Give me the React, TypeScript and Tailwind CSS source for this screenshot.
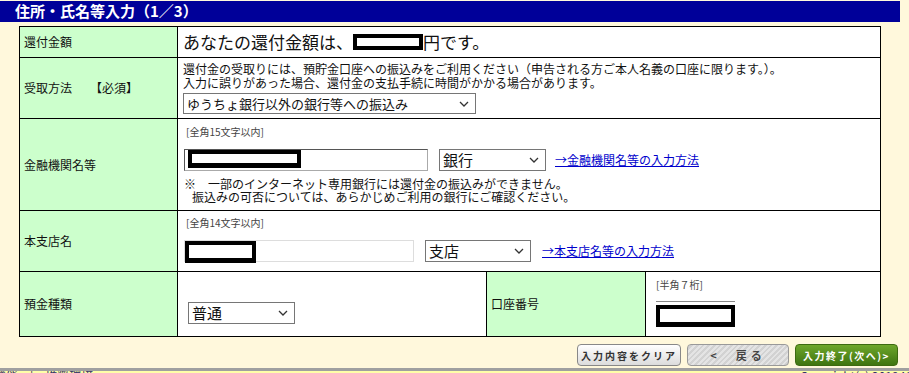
import { ReactNode } from 'react';

const FONT = { fontFamily: '"MS PGothic", "Noto Sans CJK JP", "Liberation Sans", sans-serif' };

function Chevron() {
    return (
        <svg width="10" height="6" viewBox="0 0 10 6" className="pointer-events-none absolute right-[6px] top-1/2 -translate-y-1/2">
            <path d="M1 1 L5 5 L9 1" fill="none" stroke="#333" strokeWidth="1.3" />
        </svg>
    );
}

function FakeSelect({ value, className, textClass }: { value: string; className: string; textClass: string }) {
    return (
        <div className={`relative flex items-center border border-[#767676] bg-white pl-[3px] ${className}`}>
            <span className={`text-[#111] ${textClass}`}>{value}</span>
            <Chevron />
        </div>
    );
}

function Redact({ className }: { className: string }) {
    return <div className={`border-black bg-white ${className}`} />;
}

function Label({ children }: { children: ReactNode }) {
    return (
        <td className="border border-black bg-[#ccffcc] px-[4px] align-middle text-[12px] text-[#111]">
            {children}
        </td>
    );
}

export default function App() {
    return (
        <div className="h-[373px] w-[909px] overflow-hidden bg-[#fff8dc]" style={FONT}>
            {/* Title bar */}
            <div className="mt-px flex h-[21px] w-[900px] items-center bg-[#000099] pl-[15px] text-[15px] font-bold text-white">
                住所・氏名等入力（1／3）
            </div>

            {/* Form table */}
            <table className="ml-[19px] mt-[4px] w-[861px] table-fixed border-collapse bg-white">
                <colgroup>
                    <col className="w-[158px]" />
                    <col className="w-[309px]" />
                    <col className="w-[159px]" />
                    <col className="w-[235px]" />
                </colgroup>
                <tbody>
                    <tr className="h-[31px]">
                        <Label>還付金額</Label>
                        <td colSpan={3} className="border border-black px-[5px] align-middle">
                            <div className="flex items-center text-[17px] text-[#111]">
                                あなたの還付金額は、
                                <Redact className="h-[16px] w-[70px] border-[4px]" />
                                円です。
                            </div>
                        </td>
                    </tr>
                    <tr className="h-[61px]">
                        <Label>受取方法　　【必須】</Label>
                        <td colSpan={3} className="border border-black px-[5px] py-[4px] align-top">
                            <p className="text-[12px] leading-[14px] text-[#111]">
                                還付金の受取りには、預貯金口座への振込みをご利用ください（申告される方ご本人名義の口座に限ります。）。
                            </p>
                            <p className="text-[12px] leading-[14px] text-[#111]">
                                入力に誤りがあった場合、還付金の支払手続に時間がかかる場合があります。
                            </p>
                            <FakeSelect value="ゆうちょ銀行以外の銀行等への振込み" className="mt-[3px] h-[21px] w-[293px]" textClass="text-[13px]" />
                        </td>
                    </tr>
                    <tr className="h-[92px]">
                        <Label>金融機関名等</Label>
                        <td colSpan={3} className="border border-black px-[6px] pt-[7px] pb-[4px] align-top">
                            <p className="pl-[2px] text-[10px] leading-[12px] text-[#444]">[全角15文字以内]</p>
                            <div className="mt-[11px] flex items-center">
                                <div className="flex h-[22px] w-[244px] items-start border border-[#aaa] border-l-[#555] border-t-[#555] bg-white pl-[3px]">
                                    <Redact className="h-[18px] w-[113px] border-[4px] border-b-[5px]" />
                                </div>
                                <FakeSelect value="銀行" className="ml-[11px] h-[22px] w-[107px]" textClass="text-[15px]" />
                                <a href="#" className="ml-[9px] text-[12px] text-[#0000cc] underline">→金融機関名等の入力方法</a>
                            </div>
                            <p className="mt-[6px] text-[12px] leading-[13px] text-[#111]">
                                ※　一部のインターネット専用銀行には還付金の振込みができません。
                            </p>
                            <p className="pl-[8px] text-[12px] leading-[13px] text-[#111]">
                                振込みの可否については、あらかじめご利用の銀行にご確認ください。
                            </p>
                        </td>
                    </tr>
                    <tr className="h-[61px]">
                        <Label>本支店名</Label>
                        <td colSpan={3} className="border border-black px-[6px] pt-[6px] align-top">
                            <p className="pl-[2px] text-[10px] leading-[12px] text-[#444]">[全角14文字以内]</p>
                            <div className="mt-[11px] flex items-center">
                                <div className="flex h-[22px] w-[230px] items-start border border-[#ddd] bg-white">
                                    <Redact className="h-[22px] w-[71px] border-[4px] border-b-[5px]" />
                                </div>
                                <FakeSelect value="支店" className="ml-[11px] h-[22px] w-[106px]" textClass="text-[15px]" />
                                <a href="#" className="ml-[11px] text-[12px] text-[#0000cc] underline">→本支店名等の入力方法</a>
                            </div>
                        </td>
                    </tr>
                    <tr className="h-[65px]">
                        <Label>預金種類</Label>
                        <td className="border border-black px-[10px] pt-[30px] align-top">
                            <FakeSelect value="普通" className="h-[22px] w-[107px]" textClass="text-[15px]" />
                        </td>
                        <Label>口座番号</Label>
                        <td className="border border-black px-[10px] pt-[7px] align-top">
                            <p className="text-[10px] leading-[12px] text-[#444]">[半角７桁]</p>
                            <div className="mt-[10px] w-[79px] border-t border-[#888]">
                                <Redact className="mt-[3px] h-[22px] w-[79px] border-[4px] border-b-[5px]" />
                            </div>
                        </td>
                    </tr>
                </tbody>
            </table>

            {/* Buttons */}
            <div className="mt-[7px] flex justify-end gap-[6px] pr-[11px]">
                <button className="flex h-[22px] w-[104px] items-center justify-center whitespace-nowrap rounded-[4px] border border-[#888] bg-gradient-to-b from-white to-[#dcdcdc] text-[10px] font-bold tracking-[2px] text-[#333]">
                    入力内容をクリア
                </button>
                <button className="flex h-[22px] w-[102px] items-center justify-center whitespace-nowrap rounded-[4px] border border-[#999] bg-[repeating-linear-gradient(135deg,#e4e4e4_0px,#e4e4e4_2px,#d2d2d2_2px,#d2d2d2_4px)] text-[11px] font-bold tracking-[4px] text-[#444]">
                    &lt;　戻る
                </button>
                <button className="flex h-[22px] w-[103px] items-center justify-center whitespace-nowrap rounded-[4px] border border-[#3d6a10] bg-gradient-to-b from-[#6ea62a] to-[#3f7510] text-[10px] font-bold tracking-[1.5px] text-white">
                    入力終了(次へ)&gt;
                </button>
            </div>

            {/* Footer */}
            <div className="mt-[2px] h-[3px] bg-[#a0a0a0]" />
            <div className="flex h-[20px] justify-between bg-[#ffffa8] text-[12px] leading-[9px] text-[#333366]">
                <span className="-ml-[6px] overflow-hidden">機能　|　推奨環境</span>
                <span className="w-[109px] overflow-hidden whitespace-nowrap">Copyright(c) 2019 NTA</span>
            </div>
        </div>
    );
}
